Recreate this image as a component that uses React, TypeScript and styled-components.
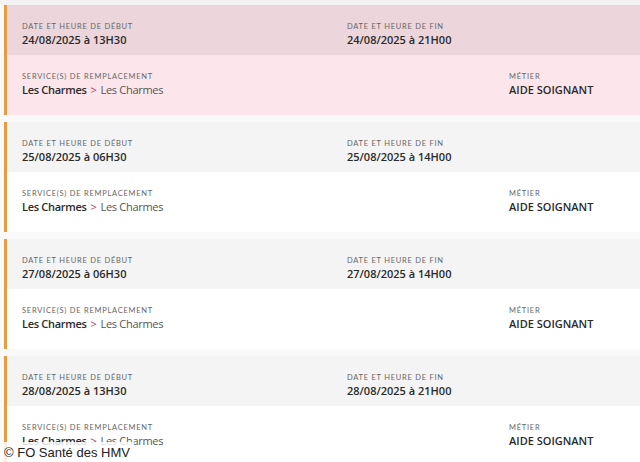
import React from "react";
import styled, { createGlobalStyle } from "styled-components";

type Shift = {
  start: string;
  end: string;
  service: string;
  sub: string;
  job: string;
  active?: boolean;
};

const shifts: Shift[] = [
  { start: "24/08/2025 à 13H30", end: "24/08/2025 à 21H00", service: "Les Charmes", sub: "Les Charmes", job: "AIDE SOIGNANT", active: true },
  { start: "25/08/2025 à 06H30", end: "25/08/2025 à 14H00", service: "Les Charmes", sub: "Les Charmes", job: "AIDE SOIGNANT" },
  { start: "27/08/2025 à 06H30", end: "27/08/2025 à 14H00", service: "Les Charmes", sub: "Les Charmes", job: "AIDE SOIGNANT" },
  { start: "28/08/2025 à 13H30", end: "28/08/2025 à 21H00", service: "Les Charmes", sub: "Les Charmes", job: "AIDE SOIGNANT" },
];

const GlobalStyle = createGlobalStyle`
  html, body {
    margin: 0;
    padding: 0;
    background: #f9f9f9;
    overflow: hidden;
  }
  body {
    font-family: "Open Sans", "Noto Sans", sans-serif;
  }
`;

const App: React.FC = () => (
  <>
    <GlobalStyle />
    <Page>
      <List>
        {shifts.map((s, i) => (
          <Card key={i}>
            <Head $active={s.active}>
              <Field>
                <Label>Date et heure de début</Label>
                <Value>{s.start}</Value>
              </Field>
              <Field>
                <Label>Date et heure de fin</Label>
                <Value>{s.end}</Value>
              </Field>
            </Head>
            <Body $active={s.active}>
              <Field>
                <Label>Service(s) de remplacement</Label>
                <Value $tight>
                  {s.service}
                  <Arrow>&gt;</Arrow>
                  <Sub>{s.sub}</Sub>
                </Value>
              </Field>
              <Field>
                <Label>Métier</Label>
                <Value>{s.job}</Value>
              </Field>
            </Body>
          </Card>
        ))}
      </List>
      <Credit>© FO Santé des HMV</Credit>
    </Page>
  </>
);

const Page = styled.div`
  position: relative;
  width: 640px;
  height: 462px;
  overflow: hidden;
  background: #f9f9f9;
  border-top: 5px solid #f3f1f1;
  box-sizing: border-box;
`;

const List = styled.div`
  display: flex;
  flex-direction: column;
  gap: 7px;
  padding-left: 4px;
`;

const Card = styled.div`
  border-left: 3px solid #e89b45;
  display: flex;
  flex-direction: column;
`;

const Head = styled.div<{ $active?: boolean }>`
  display: grid;
  grid-template-columns: 325px 1fr;
  height: 50px;
  box-sizing: border-box;
  padding: 17px 0 0 15px;
  background: ${(p) => (p.$active ? "#ecd6db" : "#f4f4f4")};
`;

const Body = styled.div<{ $active?: boolean }>`
  display: grid;
  grid-template-columns: 487px 1fr;
  height: 60px;
  box-sizing: border-box;
  padding: 17px 0 0 15px;
  background: ${(p) => (p.$active ? "#fde6eb" : "#ffffff")};
`;

const Field = styled.div`
  display: flex;
  flex-direction: column;
  gap: 1px;
`;

const Label = styled.div`
  font-family: "Lato", "Noto Sans", sans-serif;
  font-size: 7.5px;
  line-height: 10px;
  letter-spacing: 0.75px;
  text-transform: uppercase;
  color: #666;
`;

const Value = styled.div<{ $tight?: boolean }>`
  font-size: 11px;
  line-height: 14px;
  font-weight: 600;
  color: #2a2a2a;
  letter-spacing: ${(p) => (p.$tight ? "-0.3px" : "0")};
`;

const Arrow = styled.span`
  color: #c2336a;
  font-weight: 400;
  margin: 0 4px;
`;

const Sub = styled.span`
  font-weight: 400;
  color: #555;
`;

const Credit = styled.div`
  position: absolute;
  left: 0;
  bottom: 0;
  padding: 3px 4px 2px 4px;
  background: rgba(255, 255, 255, 0.82);
  font-family: "Liberation Sans", Arial, sans-serif;
  font-size: 13px;
  color: #222;
`;

export default App;
